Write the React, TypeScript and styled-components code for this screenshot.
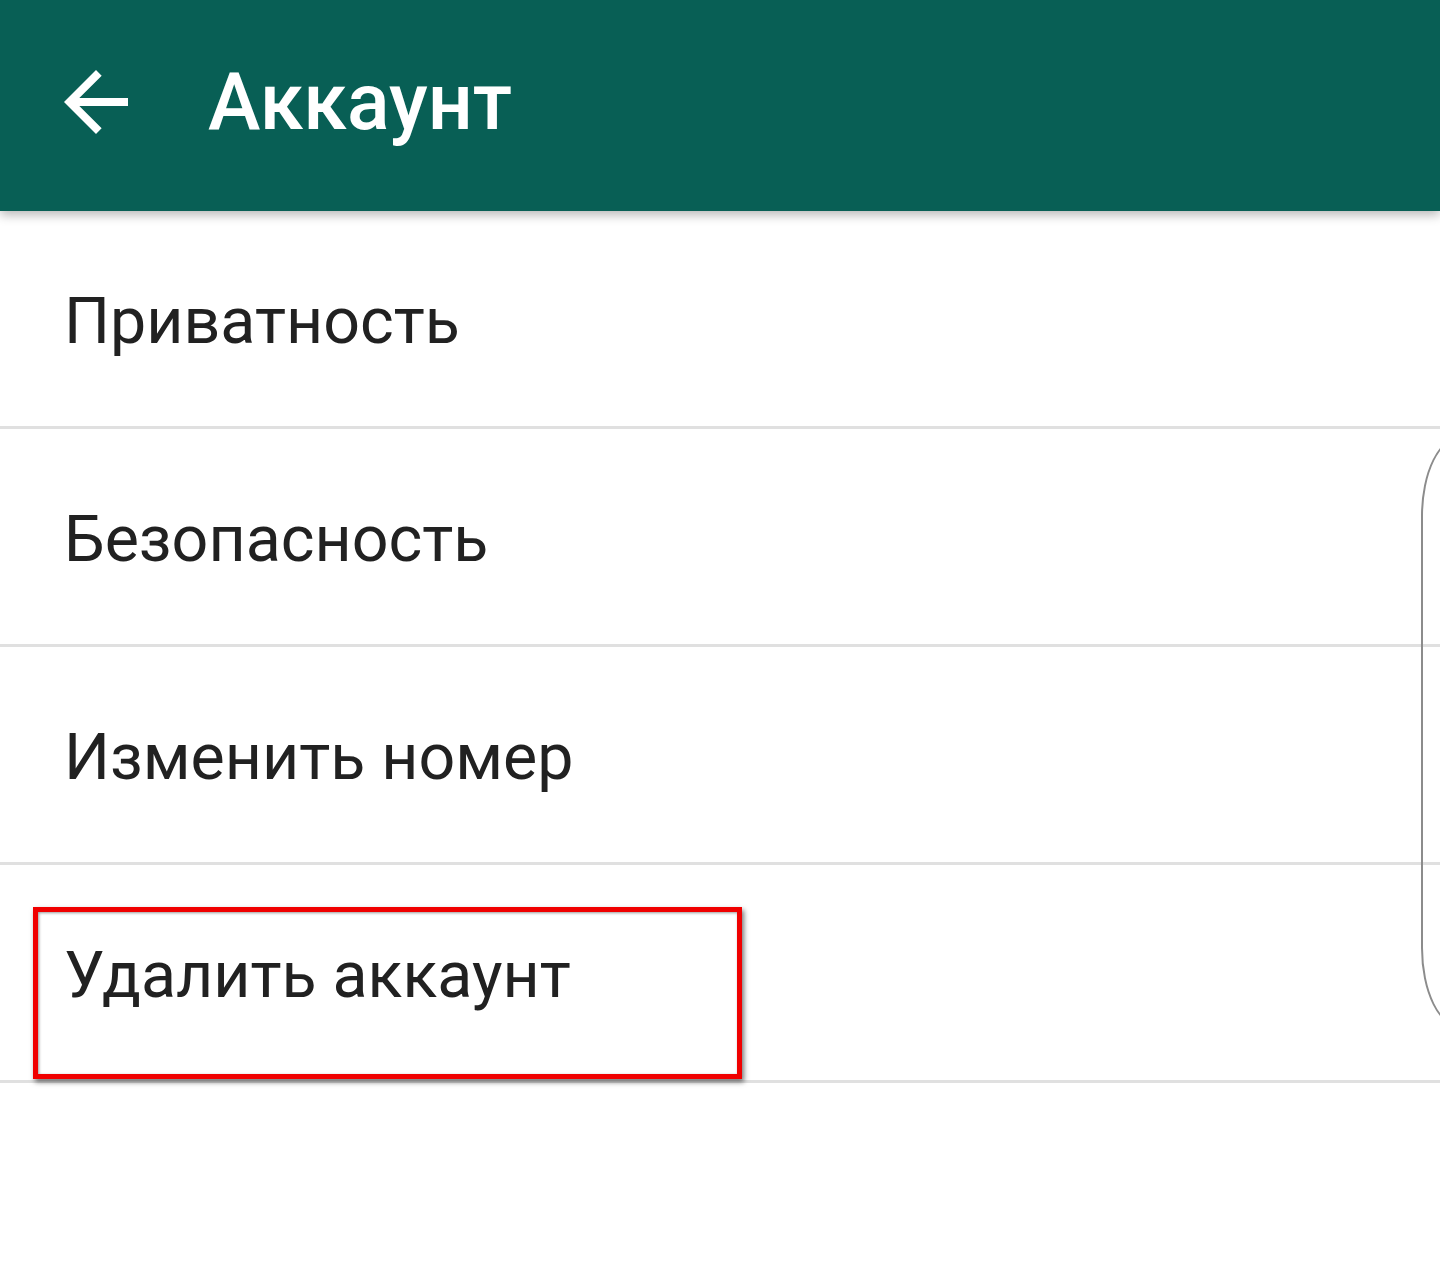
import React from "react";
import styled, { createGlobalStyle } from "styled-components";

const Global = createGlobalStyle`
  html, body { margin: 0; padding: 0; background: #ffffff; }
  body { font-family: Roboto, "Noto Sans", sans-serif; }
  * { box-sizing: border-box; }
`;

const Screen = styled.div`
  position: relative;
  width: 1440px;
  height: 1277px;
  overflow: hidden;
  background: #ffffff;
`;

const Toolbar = styled.header`
  position: relative;
  z-index: 2;
  height: 211px;
  background: #085f55;
  display: flex;
  align-items: center;
  padding-left: 48px;
  box-shadow: 0 4px 10px rgba(0, 0, 0, 0.28);
`;

const BackButton = styled.div`
  width: 96px;
  height: 96px;
  display: flex;
  align-items: center;
  justify-content: center;
  margin-right: 64px;
  margin-top: -8px;
`;

const Title = styled.h1`
  margin: 0;
  margin-top: -8px;
  font-family: Roboto, sans-serif;
  font-weight: 500;
  font-size: 79px;
  color: #ffffff;
  letter-spacing: 0;
`;

const List = styled.div`
  display: flex;
  flex-direction: column;
`;

const Row = styled.div`
  height: 218px;
  border-bottom: 3px solid #e0e0e0;
  display: flex;
  align-items: center;
  padding-left: 64px;
`;

const RowLabel = styled.span`
  font-family: Roboto, sans-serif;
  font-size: 64.5px;
  color: #212121;
  margin-top: 4px;
`;

const EdgeCurve = styled.div`
  position: absolute;
  left: 1421px;
  top: 436px;
  width: 80px;
  height: 592px;
  border: 2px solid #8c8c8c;
  border-radius: 40px / 80px;
`;

const Highlight = styled.div`
  position: absolute;
  left: 33px;
  top: 907px;
  width: 709px;
  height: 172px;
  border: 5px solid #f00000;
  box-shadow: 2px 3px 5px rgba(0, 0, 0, 0.55), inset 1px 1px 3px rgba(0, 0, 0, 0.4);
`;

const items = ["Приватность", "Безопасность", "Изменить номер", "Удалить аккаунт"];

export default function App() {
  return (
    <Screen>
      <Global />
      <Toolbar>
        <BackButton>
          <svg width="96" height="96" viewBox="0 0 24 24" fill="#ffffff">
            <path d="M20 11H7.83l5.59-5.59L12 4l-8 8 8 8 1.41-1.41L7.83 13H20v-2z" />
          </svg>
        </BackButton>
        <Title>Аккаунт</Title>
      </Toolbar>
      <List>
        {items.map((t) => (
          <Row key={t}>
            <RowLabel>{t}</RowLabel>
          </Row>
        ))}
      </List>
      <EdgeCurve />
      <Highlight />
    </Screen>
  );
}
